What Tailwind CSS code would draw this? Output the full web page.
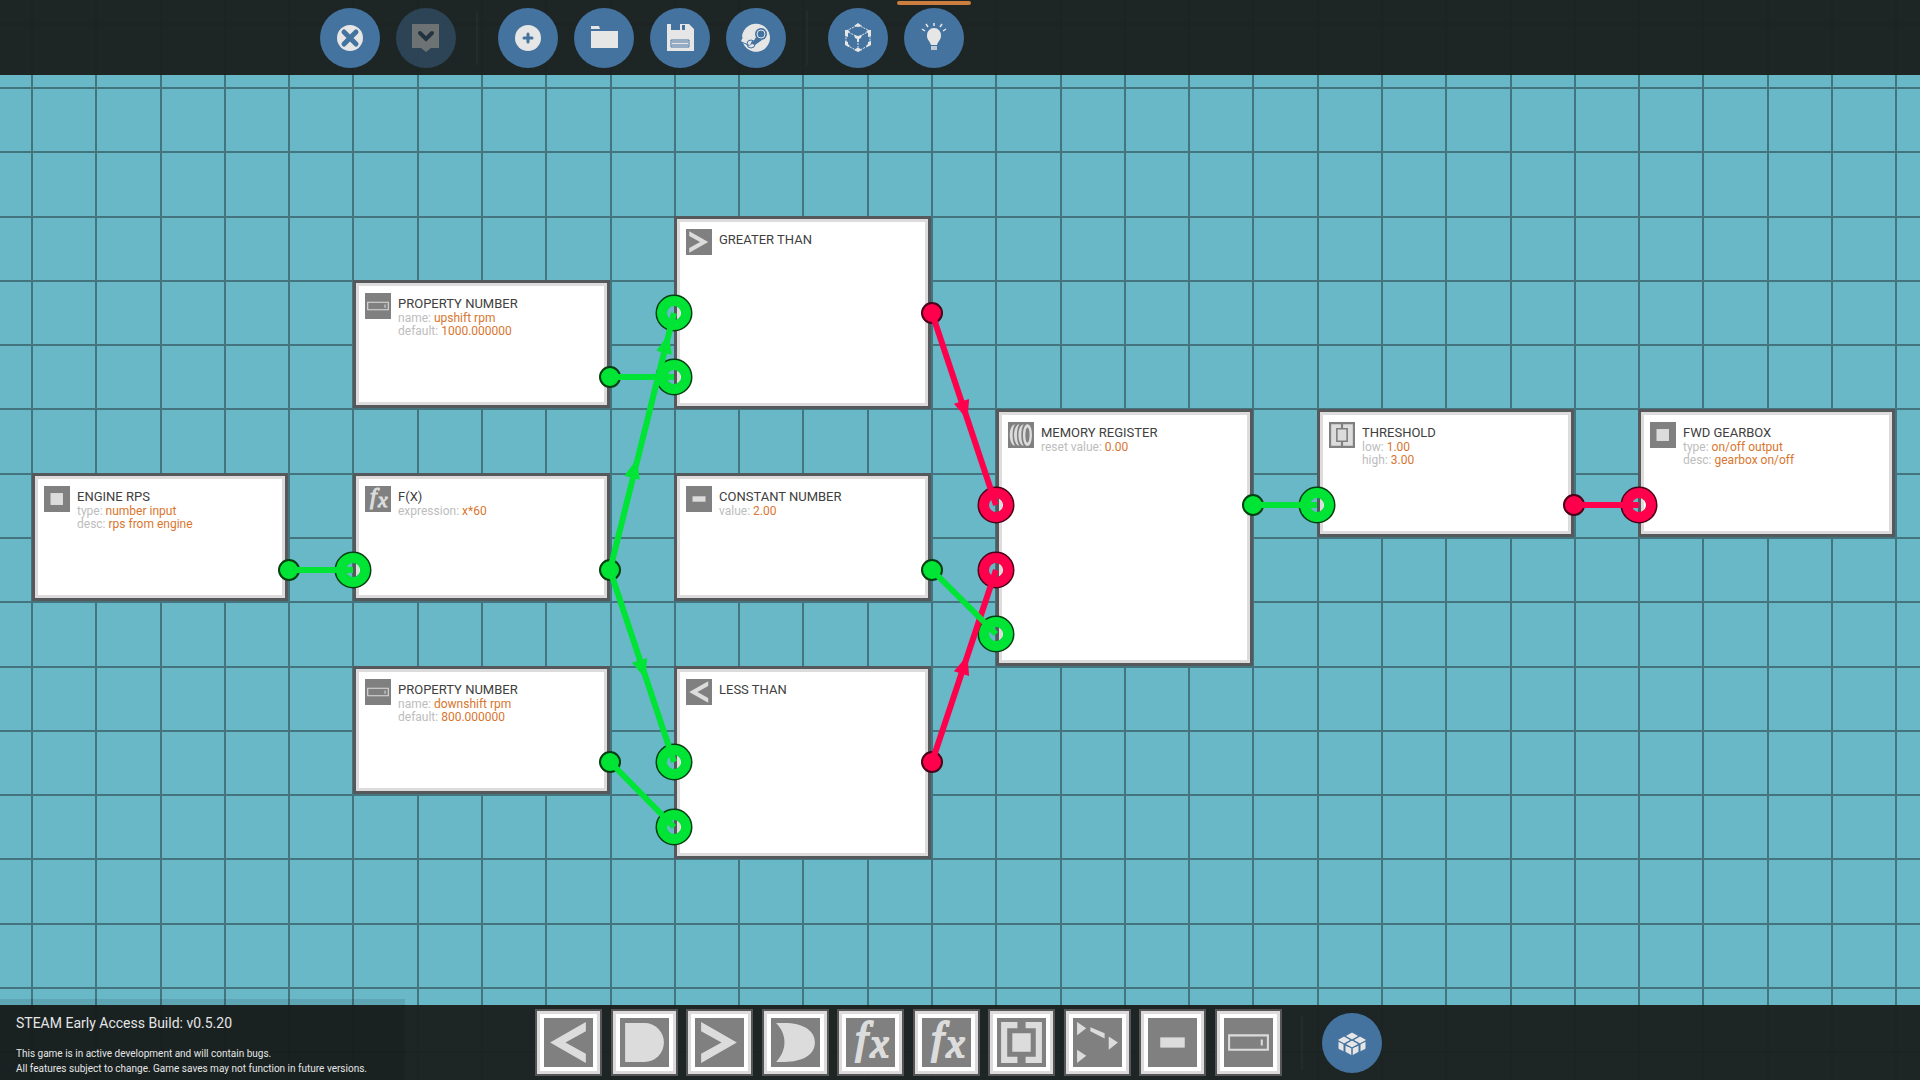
<!DOCTYPE html>
<html lang="en">
<head>
    <meta charset="UTF-8">
    <meta name="viewport" content="width=device-width, initial-scale=1.0">
    <title>Microcontroller Editor</title>
    <script src="https://cdn.jsdelivr.net/npm/@tailwindcss/browser@4"></script>
</head>
<body class="relative flex flex-col justify-between min-h-screen overflow-hidden bg-[#68b8c7] font-['Roboto',sans-serif]">

    <!-- Shared icons -->
    <svg class="hidden">
        <symbol id="icon-less" viewBox="0 0 48 48">
            <path d="M6 24 41 4v9L21 24l20 11v9z" />
        </symbol>
        <symbol id="icon-greater" viewBox="0 0 48 48">
            <path d="M41 24 6 4v9l20 11L6 35v9z" />
        </symbol>
        <symbol id="icon-and" viewBox="0 0 48 48">
            <path d="M5 5h19a19 19 0 0 1 0 38H5z" />
        </symbol>
        <symbol id="icon-or" viewBox="0 0 48 48">
            <path d="M5 5h8C31 5 43 12 43 24S31 43 13 43H5C16 32 16 16 5 5z" />
        </symbol>
        <symbol id="icon-fx" viewBox="0 0 48 48">
            <g font-family="Liberation Serif, serif" font-style="italic" stroke="#dcdcdc" stroke-width="2">
                <text x="9" y="34" font-size="44">f</text>
                <text x="24" y="38" font-size="40">x</text>
            </g>
        </symbol>
        <symbol id="icon-threshold" viewBox="0 0 48 48">
            <path d="M4 4h16v6H10v28h10v6H4zM28 4h16v40H28v-6h10V10H28zM15 15h18v18H15z" />
        </symbol>
        <symbol id="icon-threshold-small" viewBox="0 0 48 48">
            <path d="M4 4h18v7h-9v26h9v7H4zM26 4h18v40H26v-7h9V11h-9zM16 14h16v20H16z" />
        </symbol>
        <symbol id="icon-switch" viewBox="0 0 48 48">
            <path d="M4 4l9 6-9 7zM35 18l9 6-9 7zM4 31l9 6-9 7zM17 9l14 6v5l-14-7z" />
        </symbol>
        <symbol id="icon-constant" viewBox="0 0 48 48">
            <path d="M12 19h24v10H12z" />
        </symbol>
        <symbol id="icon-property" viewBox="0 0 48 48">
            <path d="M4 16h40v16H4zM6 18v12h36V18zM36 21h2v6h-2z" fill-rule="evenodd" />
        </symbol>
        <symbol id="icon-io" viewBox="0 0 48 48">
            <path d="M12 13h23v22H12z" />
        </symbol>
        <symbol id="icon-memory" viewBox="0 0 48 48">
            <path d="M13 4C0 6 0 42 13 44 7 36 7 12 13 4zM21 4C8 6 8 42 21 44 15 36 15 12 21 4zM29 4C16 6 16 42 29 44 23 36 23 12 29 4z" />
            <path d="M36 4c11 0 11 40 0 40s-11-40 0-40zm0 6c-5 0-5 28 0 28s5-28 0-28z" fill-rule="evenodd" />
        </symbol>
    </svg>

    <!-- Logic canvas -->
    <main class="absolute inset-0">
        <svg class="absolute inset-0 w-full h-full">
            <defs>
                <pattern id="grid" x="31" y="87" width="450" height="450" patternUnits="userSpaceOnUse">
                    <path fill="#44757f" d="M0 0h2v450H0zM64 0h2v450h-2zM129 0h2v450h-2zM193 0h2v450h-2zM257 0h2v450h-2zM321 0h2v450h-2zM386 0h2v450h-2z" />
                    <path fill="#44757f" d="M0 0v2h450V0zM0 64v2h450v-2zM0 129v2h450v-2zM0 193v2h450v-2zM0 257v2h450v-2zM0 321v2h450v-2zM0 386v2h450v-2z" />
                </pattern>
            </defs>
            <rect width="100%" height="100%" fill="url(#grid)" />
        </svg>

        <!-- Nodes -->
        <section class="absolute left-[32px] top-[473px] w-[256px] h-[128px] flex items-start gap-[7px] pl-[9px] pt-[10px] bg-white border-[3px] border-[#55595b] shadow-[inset_0_0_0_3px_#dedbdc]">
            <svg class="w-[26px] h-[26px] bg-[#808080] fill-[#dcdcdc]"><use href="#icon-io" /></svg>
            <div class="pt-[3px] text-[12px] leading-[13px] text-[#bdbdbd]">
                <h2 class="text-[13px] leading-[16px] text-[#404040]">ENGINE RPS</h2>
                <p>type: <span class="text-[#d8762f]">number input</span></p>
                <p>desc: <span class="text-[#d8762f]">rps from engine</span></p>
            </div>
        </section>

        <section class="absolute left-[353px] top-[280px] w-[257px] h-[128px] flex items-start gap-[7px] pl-[9px] pt-[10px] bg-white border-[3px] border-[#55595b] shadow-[inset_0_0_0_3px_#dedbdc]">
            <svg class="w-[26px] h-[26px] bg-[#808080] fill-[#dcdcdc]"><use href="#icon-property" /></svg>
            <div class="pt-[3px] text-[12px] leading-[13px] text-[#bdbdbd]">
                <h2 class="text-[13px] leading-[16px] text-[#404040]">PROPERTY NUMBER</h2>
                <p>name: <span class="text-[#d8762f]">upshift rpm</span></p>
                <p>default: <span class="text-[#d8762f]">1000.000000</span></p>
            </div>
        </section>

        <section class="absolute left-[353px] top-[473px] w-[257px] h-[128px] flex items-start gap-[7px] pl-[9px] pt-[10px] bg-white border-[3px] border-[#55595b] shadow-[inset_0_0_0_3px_#dedbdc]">
            <svg class="w-[26px] h-[26px] bg-[#808080] fill-[#dcdcdc]"><use href="#icon-fx" /></svg>
            <div class="pt-[3px] text-[12px] leading-[13px] text-[#bdbdbd]">
                <h2 class="text-[13px] leading-[16px] text-[#404040]">F(X)</h2>
                <p>expression: <span class="text-[#d8762f]">x*60</span></p>
            </div>
        </section>

        <section class="absolute left-[353px] top-[666px] w-[257px] h-[128px] flex items-start gap-[7px] pl-[9px] pt-[10px] bg-white border-[3px] border-[#55595b] shadow-[inset_0_0_0_3px_#dedbdc]">
            <svg class="w-[26px] h-[26px] bg-[#808080] fill-[#dcdcdc]"><use href="#icon-property" /></svg>
            <div class="pt-[3px] text-[12px] leading-[13px] text-[#bdbdbd]">
                <h2 class="text-[13px] leading-[16px] text-[#404040]">PROPERTY NUMBER</h2>
                <p>name: <span class="text-[#d8762f]">downshift rpm</span></p>
                <p>default: <span class="text-[#d8762f]">800.000000</span></p>
            </div>
        </section>

        <section class="absolute left-[674px] top-[216px] w-[257px] h-[193px] flex items-start gap-[7px] pl-[9px] pt-[10px] bg-white border-[3px] border-[#55595b] shadow-[inset_0_0_0_3px_#dedbdc]">
            <svg class="w-[26px] h-[26px] bg-[#808080] fill-[#dcdcdc]"><use href="#icon-greater" /></svg>
            <div class="pt-[3px]">
                <h2 class="text-[13px] leading-[16px] text-[#404040]">GREATER THAN</h2>
            </div>
        </section>

        <section class="absolute left-[674px] top-[473px] w-[257px] h-[128px] flex items-start gap-[7px] pl-[9px] pt-[10px] bg-white border-[3px] border-[#55595b] shadow-[inset_0_0_0_3px_#dedbdc]">
            <svg class="w-[26px] h-[26px] bg-[#808080] fill-[#dcdcdc]"><use href="#icon-constant" /></svg>
            <div class="pt-[3px] text-[12px] leading-[13px] text-[#bdbdbd]">
                <h2 class="text-[13px] leading-[16px] text-[#404040]">CONSTANT NUMBER</h2>
                <p>value: <span class="text-[#d8762f]">2.00</span></p>
            </div>
        </section>

        <section class="absolute left-[674px] top-[666px] w-[257px] h-[193px] flex items-start gap-[7px] pl-[9px] pt-[10px] bg-white border-[3px] border-[#55595b] shadow-[inset_0_0_0_3px_#dedbdc]">
            <svg class="w-[26px] h-[26px] bg-[#808080] fill-[#dcdcdc]"><use href="#icon-less" /></svg>
            <div class="pt-[3px]">
                <h2 class="text-[13px] leading-[16px] text-[#404040]">LESS THAN</h2>
            </div>
        </section>

        <section class="absolute left-[996px] top-[409px] w-[257px] h-[257px] flex items-start gap-[7px] pl-[9px] pt-[10px] bg-white border-[3px] border-[#55595b] shadow-[inset_0_0_0_3px_#dedbdc]">
            <svg class="w-[26px] h-[26px] bg-[#808080] fill-[#dcdcdc]"><use href="#icon-memory" /></svg>
            <div class="pt-[3px] text-[12px] leading-[13px] text-[#bdbdbd]">
                <h2 class="text-[13px] leading-[16px] text-[#404040]">MEMORY REGISTER</h2>
                <p>reset value: <span class="text-[#d8762f]">0.00</span></p>
            </div>
        </section>

        <section class="absolute left-[1317px] top-[409px] w-[257px] h-[128px] flex items-start gap-[7px] pl-[9px] pt-[10px] bg-white border-[3px] border-[#55595b] shadow-[inset_0_0_0_3px_#dedbdc]">
            <svg class="w-[26px] h-[26px] bg-[#808080] fill-[#dcdcdc]"><use href="#icon-threshold-small" /></svg>
            <div class="pt-[3px] text-[12px] leading-[13px] text-[#bdbdbd]">
                <h2 class="text-[13px] leading-[16px] text-[#404040]">THRESHOLD</h2>
                <p>low: <span class="text-[#d8762f]">1.00</span></p>
                <p>high: <span class="text-[#d8762f]">3.00</span></p>
            </div>
        </section>

        <section class="absolute left-[1638px] top-[409px] w-[257px] h-[128px] flex items-start gap-[7px] pl-[9px] pt-[10px] bg-white border-[3px] border-[#55595b] shadow-[inset_0_0_0_3px_#dedbdc]">
            <svg class="w-[26px] h-[26px] bg-[#808080] fill-[#dcdcdc]"><use href="#icon-io" /></svg>
            <div class="pt-[3px] text-[12px] leading-[13px] text-[#bdbdbd]">
                <h2 class="text-[13px] leading-[16px] text-[#404040]">FWD GEARBOX</h2>
                <p>type: <span class="text-[#d8762f]">on/off output</span></p>
                <p>desc: <span class="text-[#d8762f]">gearbox on/off</span></p>
            </div>
        </section>

        <!-- Ports and wires -->
        <svg class="absolute inset-0 w-full h-full">
            <defs>
                <g id="port-in">
                    <circle r="13" fill="none" stroke-width="11" stroke="#053f12" />
                    <circle r="12" fill="none" stroke-width="10" stroke="#00e436" />
                </g>
                <g id="port-in-off">
                    <circle r="13" fill="none" stroke-width="11" stroke="#4a0018" />
                    <circle r="12" fill="none" stroke-width="10" stroke="#ff004d" />
                </g>
                <circle id="port-out" r="10" fill="#00e436" stroke="#053f12" stroke-width="2" />
                <circle id="port-out-off" r="10" fill="#ff004d" stroke="#4a0018" stroke-width="2" />
                <path id="arrow" d="M-8-8 11 0-8 8z" />
            </defs>
            <use href="#port-out" x="289" y="570" />
            <use href="#port-out" x="610" y="377" />
            <use href="#port-out" x="610" y="570" />
            <use href="#port-out" x="610" y="762" />
            <use href="#port-out" x="932" y="570" />
            <use href="#port-out" x="1253" y="505" />
            <use href="#port-out-off" x="932" y="313" />
            <use href="#port-out-off" x="932" y="762" />
            <use href="#port-out-off" x="1574" y="505" />
            <use href="#port-in" x="353" y="570" />
            <use href="#port-in" x="674" y="313" />
            <use href="#port-in" x="674" y="377" />
            <use href="#port-in" x="674" y="762" />
            <use href="#port-in" x="674" y="827" />
            <use href="#port-in" x="996" y="634" />
            <use href="#port-in" x="1317" y="505" />
            <use href="#port-in-off" x="996" y="505" />
            <use href="#port-in-off" x="996" y="570" />
            <use href="#port-in-off" x="1639" y="505" />

            <g stroke="#ff004d" stroke-width="6">
                <path d="M932 313 996 505M932 762 996 570M1574 505h65" />
            </g>
            <g fill="#ff004d">
                <use href="#arrow" transform="translate(964 409) rotate(72)" />
                <use href="#arrow" transform="translate(964 666) rotate(-72)" />
            </g>
            <g stroke="#00e436" stroke-width="6">
                <path d="M289 570h64M610 377h64M610 570 674 313M610 570 674 762M610 762 674 827M932 570 996 634M1253 505h64" />
            </g>
            <g fill="#00e436">
                <use href="#arrow" transform="translate(634 470) rotate(-76)" />
                <use href="#arrow" transform="translate(666 345) rotate(-76)" />
                <use href="#arrow" transform="translate(642 668) rotate(72)" />
            </g>
        </svg>
    </main>

    <!-- Top toolbar -->
    <header class="relative h-[75px] pl-80 flex items-center gap-5 bg-[#1b2020]/97">
        <div class="flex gap-4">
            <button aria-label="Close" class="w-[60px] h-[60px] rounded-full bg-[#44739f]">
                <svg viewBox="0 0 60 60" class="w-full h-full">
                    <circle cx="30" cy="30" r="13" fill="#e6e6e6" />
                    <path d="M24 24 36 36M36 24 24 36" stroke="#44739f" stroke-width="5" stroke-linecap="round" />
                </svg>
            </button>
            <button aria-label="Confirm" disabled class="w-[60px] h-[60px] rounded-full bg-[#44739f] opacity-40">
                <svg viewBox="0 0 60 60" class="w-full h-full">
                    <path d="M16 16h27v24h-8l-5 4-5-4h-9z" fill="#e6e6e6" />
                    <path d="M24 25l6 6 6-6" fill="none" stroke="#2d4c69" stroke-width="4" stroke-linecap="round" />
                </svg>
            </button>
        </div>
        <div class="w-[2px] h-[54px] bg-white/3"></div>
        <div class="flex gap-4">
            <button aria-label="New" class="w-[60px] h-[60px] rounded-full bg-[#44739f]">
                <svg viewBox="0 0 60 60" class="w-full h-full">
                    <circle cx="30" cy="30" r="13" fill="#e6e6e6" />
                    <path d="M30 26v8M26 30h8" stroke="#44739f" stroke-width="3" stroke-linecap="round" />
                </svg>
            </button>
            <button aria-label="Open" class="w-[60px] h-[60px] rounded-full bg-[#44739f]">
                <svg viewBox="0 0 60 60" class="w-full h-full">
                    <path d="M17 18h8l1 3h-9zM17 23h27v17H17z" fill="#e6e6e6" />
                </svg>
            </button>
            <button aria-label="Save" class="w-[60px] h-[60px] rounded-full bg-[#44739f]">
                <svg viewBox="0 0 60 60" class="w-full h-full">
                    <path d="M17 16h4v6h18v-6l5 5v22H17z" fill="#e6e6e6" />
                    <path d="M30 16h9v6h-9z" fill="#e6e6e6" />
                    <path d="M32 17h3v5h-3z" fill="#44739f" />
                    <path d="M21 32h18v7H21zM22 34h16M22 37h16" fill="none" stroke="#44739f" stroke-width="1" />
                </svg>
            </button>
            <button aria-label="Steam Workshop" class="w-[60px] h-[60px] rounded-full bg-[#44739f]">
                <svg viewBox="0 0 60 60" class="w-full h-full">
                    <path d="M16 29A14 14 0 1 1 17 35l6 3 6-4z" fill="#e6e6e6" />
                    <path d="M16 31l9 4" stroke="#e6e6e6" stroke-width="5" />
                    <path d="M26 36l4-7 6 3-7 5z" fill="#44739f" />
                    <circle cx="35" cy="26" r="6" fill="#44739f" />
                    <circle cx="35" cy="26" r="4" fill="none" stroke="#e6e6e6" stroke-width="1" />
                    <circle cx="25" cy="36" r="4" fill="none" stroke="#44739f" stroke-width="1" />
                </svg>
            </button>
        </div>
        <div class="w-[2px] h-[54px] bg-white/3"></div>
        <div class="flex gap-4">
            <button aria-label="3D view" class="w-[60px] h-[60px] rounded-full bg-[#44739f]">
                <svg viewBox="0 0 60 60" class="w-full h-full">
                    <path d="M30 17 42 23v14L30 43 18 37V23zM18 23l12 6 12-6M30 29v14" fill="none" stroke="#e6e6e6" stroke-width="1" stroke-dasharray="2 1" />
                    <path d="M26 18l4-3 4 3-4 1zM17 22l3 0 2 2-2 1v4l-3-1zM43 22l-3 0-2 2 2 1v4l3-1zM17 33l3 1v2l2 2-1 1-4-2zM43 33l-3 1v2l-2 2 1 1 4-2zM26 42l3-2h2l3 2-4 2zM26 27l4 1 4-1-1 3-2 1v3h-2v-3l-2-1z" fill="#e6e6e6" />
                </svg>
            </button>
            <div class="relative flex">
                <button aria-label="Hints" class="w-[60px] h-[60px] rounded-full bg-[#44739f]">
                    <svg viewBox="0 0 60 60" class="w-full h-full">
                        <path d="M30 20a7 7 0 0 1 7 8c0 4-3 5-4 9h-6c-1-4-4-5-4-9a7 7 0 0 1 7-8z" fill="#e6e6e6" />
                        <path d="M27 39h6M27 41h6M30 18v-3M24 19l-2-3M36 19l2-3M21 23l-3-2M39 23l3-2" stroke="#e6e6e6" stroke-width="1.5" />
                    </svg>
                </button>
                <div class="absolute -top-[7px] -left-[7px] w-[74px] h-[4px] rounded-full bg-[#cb7e3e]"></div>
            </div>
        </div>
    </header>

    <!-- Bottom toolbar -->
    <footer class="relative h-[75px] flex items-center bg-[#1b2020]/97">
        <div class="self-stretch -mt-[6px] w-[405px] pl-4 pt-[16px] bg-black/10 text-[#e4e6e6]">
            <p class="text-[14px] leading-[16px]">STEAM Early Access Build: v0.5.20</p>
            <p class="mt-[15px] text-[10px] leading-[15px] whitespace-nowrap">This game is in active development and will contain bugs.<br>All features subject to change. Game saves may not function in future versions.</p>
        </div>
        <div class="ml-[130px] w-[747px] flex justify-between">
            <button aria-label="Less than" class="w-[67px] h-[67px] border-2 border-[#565656] bg-white p-[7px] shadow-[inset_0_0_0_3px_#dcdadb]">
                <svg class="w-full h-full bg-[#808080] fill-[#dcdcdc]"><use href="#icon-less" /></svg>
            </button>
            <button aria-label="And" class="w-[67px] h-[67px] border-2 border-[#565656] bg-white p-[7px] shadow-[inset_0_0_0_3px_#dcdadb]">
                <svg class="w-full h-full bg-[#808080] fill-[#dcdcdc]"><use href="#icon-and" /></svg>
            </button>
            <button aria-label="Greater than" class="w-[67px] h-[67px] border-2 border-[#565656] bg-white p-[7px] shadow-[inset_0_0_0_3px_#dcdadb]">
                <svg class="w-full h-full bg-[#808080] fill-[#dcdcdc]"><use href="#icon-greater" /></svg>
            </button>
            <button aria-label="Or" class="w-[67px] h-[67px] border-2 border-[#565656] bg-white p-[7px] shadow-[inset_0_0_0_3px_#dcdadb]">
                <svg class="w-full h-full bg-[#808080] fill-[#dcdcdc]"><use href="#icon-or" /></svg>
            </button>
            <button aria-label="Function" class="w-[67px] h-[67px] border-2 border-[#565656] bg-white p-[7px] shadow-[inset_0_0_0_3px_#dcdadb]">
                <svg class="w-full h-full bg-[#808080] fill-[#dcdcdc]"><use href="#icon-fx" /></svg>
            </button>
            <button aria-label="Function, three inputs" class="w-[67px] h-[67px] border-2 border-[#565656] bg-white p-[7px] shadow-[inset_0_0_0_3px_#dcdadb]">
                <svg class="w-full h-full bg-[#808080] fill-[#dcdcdc]"><use href="#icon-fx" /></svg>
            </button>
            <button aria-label="Threshold" class="w-[67px] h-[67px] border-2 border-[#565656] bg-white p-[7px] shadow-[inset_0_0_0_3px_#dcdadb]">
                <svg class="w-full h-full bg-[#808080] fill-[#dcdcdc]"><use href="#icon-threshold" /></svg>
            </button>
            <button aria-label="Switchbox" class="w-[67px] h-[67px] border-2 border-[#565656] bg-white p-[7px] shadow-[inset_0_0_0_3px_#dcdadb]">
                <svg class="w-full h-full bg-[#808080] fill-[#dcdcdc]"><use href="#icon-switch" /></svg>
            </button>
            <button aria-label="Constant number" class="w-[67px] h-[67px] border-2 border-[#565656] bg-white p-[7px] shadow-[inset_0_0_0_3px_#dcdadb]">
                <svg class="w-full h-full bg-[#808080] fill-[#dcdcdc]"><use href="#icon-constant" /></svg>
            </button>
            <button aria-label="Property number" class="w-[67px] h-[67px] border-2 border-[#565656] bg-white p-[7px] shadow-[inset_0_0_0_3px_#dcdadb]">
                <svg class="w-full h-full bg-[#808080] fill-[#dcdcdc]"><use href="#icon-property" /></svg>
            </button>
        </div>
        <div class="mx-[19px] w-[2px] h-[54px] bg-white/3"></div>
        <button aria-label="Components" class="w-[60px] h-[60px] rounded-full bg-[#44739f]">
            <svg viewBox="0 0 60 60" class="w-full h-full" fill="#e6e6e6" stroke="#44739f" stroke-width="1">
                <path d="M30 19l7 4-7 4-7-4zM22 23l7 4-7 4-7-4zM38 23l7 4-7 4-7-4zM30 27l7 4-7 4-7-4z" />
                <path d="M16 28l6 3v8l-6-3zM23 32l7 3v8l-7-4zM44 28l-6 3v8l6-3zM37 32l-7 3v8l7-4z" />
            </svg>
        </button>
    </footer>
</body>
</html>
